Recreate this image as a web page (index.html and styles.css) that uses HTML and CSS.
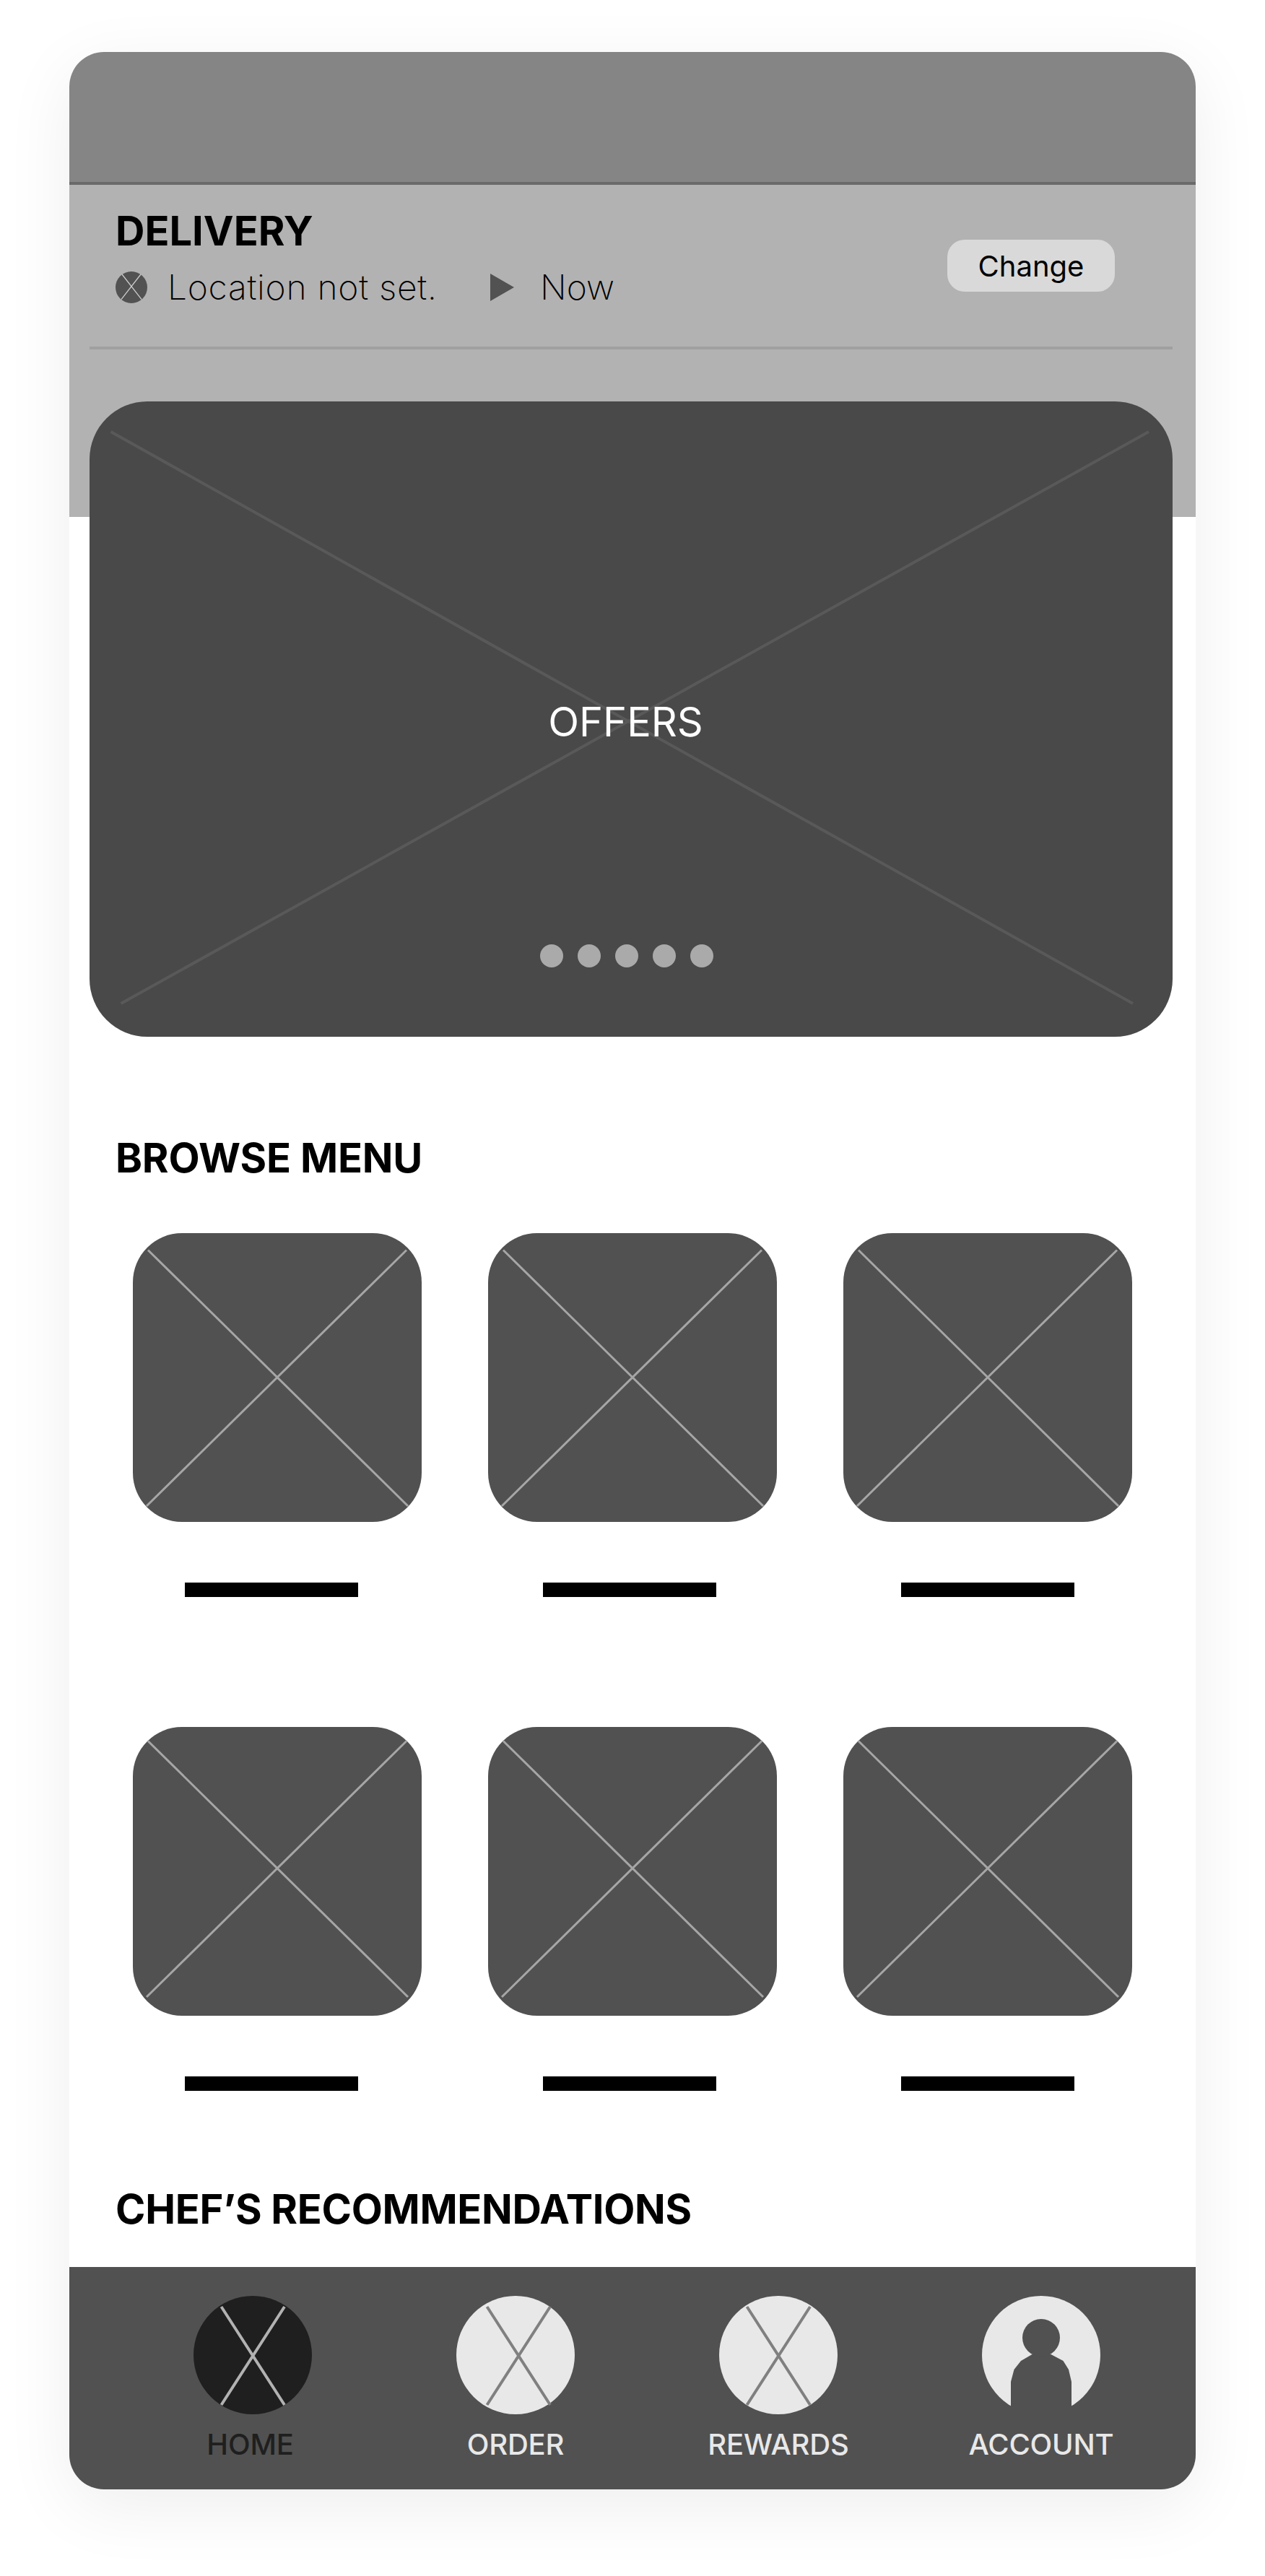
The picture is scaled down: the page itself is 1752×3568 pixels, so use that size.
FILE: index.html
```html
<!DOCTYPE html>
<html lang="en">
<head>
<meta charset="utf-8">
<title>Home</title>
<link rel="stylesheet" href="styles.css">
</head>
<body>
<svg class="defs" aria-hidden="true">
  <symbol id="tile-cross" viewBox="0 0 400 400"><path d="M21 23.5 381 378M379 23.5 19 378"/></symbol>
  <symbol id="icon-cross" viewBox="0 0 164 164"><path d="M38.5 15 126 151M126 15 38.5 151"/></symbol>
</svg>
<div class="screen">
  <div class="status-bar"></div>
  <header class="delivery">
    <div class="delivery-row">
      <div>
        <h2 class="heading">DELIVERY</h2>
        <div class="delivery-info">
          <svg class="pin" viewBox="0 0 44 44"><circle cx="22" cy="22" r="22"/><path d="M9 4 36 38.7M35 4 8 38.700"/></svg>
          <span class="place">Location not set.</span>
          <svg class="play" viewBox="0 0 33 38"><path d="M0 0 33 19 0 38z"/></svg>
          <span>Now</span>
        </div>
      </div>
      <button class="change">Change</button>
    </div>
  </header>
  <main>
    <section class="offers">
      <svg class="offers-cross" viewBox="0 0 1500 880"><path d="M29.5 42 1445 834M1467 42 43.500 834"/></svg>
      <span class="offers-label">OFFERS</span>
      <div class="dots"><i></i><i></i><i></i><i></i><i></i></div>
    </section>
    <h2 class="heading menu-title">BROWSE MENU</h2>
    <div class="tiles">
      <svg class="tile"><use href="#tile-cross"/></svg>
      <svg class="tile"><use href="#tile-cross"/></svg>
      <svg class="tile"><use href="#tile-cross"/></svg>
    </div>
    <div class="bars"><i></i><i></i><i></i></div>
    <div class="tiles second">
      <svg class="tile"><use href="#tile-cross" y="-4"/></svg>
      <svg class="tile"><use href="#tile-cross" y="-4"/></svg>
      <svg class="tile"><use href="#tile-cross" y="-4"/></svg>
    </div>
    <div class="bars"><i></i><i></i><i></i></div>
    <h2 class="heading chef-title">CHEF’S RECOMMENDATIONS</h2>
  </main>
  <nav class="tabs">
    <a class="tab active"><svg class="tab-icon" viewBox="0 0 164 164"><circle cx="82" cy="82" r="82"/><use href="#icon-cross" width="164" height="164"/></svg><span>HOME</span></a>
    <a class="tab"><svg class="tab-icon" viewBox="0 0 164 164"><circle cx="82" cy="82" r="82"/><use href="#icon-cross" x="4" width="164" height="164"/></svg><span>ORDER</span></a>
    <a class="tab"><svg class="tab-icon" viewBox="0 0 164 164"><circle cx="82" cy="82" r="82"/><use href="#icon-cross" width="164" height="164"/></svg><span>REWARDS</span></a>
    <a class="tab"><svg class="tab-icon" viewBox="0 0 164 164"><circle cx="82" cy="82" r="82"/><path class="person" d="M69.500 81 54 90 44.500 102 40 119V155L50 164H114L124 155V119L120 102 112.500 90 95.500 81z"/><circle class="person" cx="82" cy="58" r="26"/></svg><span>ACCOUNT</span></a>
  </nav>
</div>
</body>
</html>
```

FILE: styles.css
```css
* { box-sizing: border-box; }

body {
  margin: 0;
  padding: 72px 96px 120px;
  background: #fff;
  color: #000;
  font-family: Inter, "Liberation Sans", sans-serif;
}

.defs { display: none; }

.screen {
  display: flex;
  flex-direction: column;
  height: 3376px;
  border-radius: 48px;
  background: #fff;
  box-shadow: 0 24px 96px rgba(0, 0, 0, .07);
  overflow: hidden;
}

.heading {
  margin: 0;
  font-size: 56px;
  font-weight: 700;
  line-height: 68px;
}

.status-bar {
  height: 184px;
  background: #858585;
  border-bottom: 4px solid #6a6a6a;
}

.delivery {
  height: 460px;
  padding: 0 32px 0 28px;
  background: #b2b2b2;
}

.delivery-row {
  display: flex;
  justify-content: space-between;
  align-items: flex-start;
  height: 228px;
  padding: 30px 80px 0 36px;
  border-bottom: 4px solid #a0a0a0;
}

.delivery-info {
  display: flex;
  align-items: center;
  margin-top: 15px;
  font-size: 48px;
  font-weight: 200;
  line-height: 58px;
}

.pin { width: 44px; height: 44px; fill: #525252; stroke: none; }
.pin path { stroke: #ccc; stroke-width: 1.3; }
.place { width: 447px; margin-left: 28px; letter-spacing: .7px; }
.play { width: 33px; height: 38px; margin-right: 36px; fill: #525252; }

.change {
  width: 232px;
  height: 72px;
  margin-top: 46px;
  padding: 2px 0 0;
  border: 0;
  border-radius: 24px;
  background: #d9d9d9;
  color: #000;
  font: 400 40px/48px Inter, "Liberation Sans", sans-serif;
}

main { height: 2424px; }

.offers {
  position: relative;
  display: flex;
  flex-direction: column;
  align-items: center;
  width: 1500px;
  height: 880px;
  margin: -160px 0 0 28px;
  padding: 410px 12px 0 0;
  border-radius: 80px;
  background: #494949;
  color: #fff;
}

.offers-cross {
  position: absolute;
  inset: 0;
  stroke: #595959;
  stroke-width: 4;
}

.offers-label {
  position: relative;
  margin-right: 3px;
  font-size: 56px;
  line-height: 68px;
}

.dots { display: flex; gap: 20px; margin-top: 274px; }
.dots i { width: 32px; height: 32px; border-radius: 50%; background: #aaa; }

.menu-title { margin: 134px 0 70px 64px; letter-spacing: -.2px; }

.tiles { display: flex; gap: 92px; margin-left: 88px; }
.tiles.second { margin-top: 180px; }

.tile {
  width: 400px;
  height: 400px;
  border-radius: 68px;
  background: #515151;
  stroke: #a6a6a6;
  stroke-width: 3;
}

.bars { display: flex; gap: 256px; margin: 84px 0 0 160px; }
.bars i { width: 240px; height: 20px; background: #000; }

.chef-title { margin: 130px 0 0 64px; letter-spacing: -.3px; }

.tabs {
  display: flex;
  gap: 100px;
  height: 308px;
  padding: 40px 0 0 122px;
  background: #515151;
  color: #e8e8e8;
  font-size: 40px;
  font-weight: 500;
  letter-spacing: -.2px;
  line-height: 48px;
}

.tab {
  display: flex;
  flex-direction: column;
  align-items: center;
  width: 264px;
  gap: 18px;
}

.tab-icon {
  width: 164px;
  height: 164px;
  fill: #e8e8e8;
  stroke: none;
  overflow: visible;
}

.tab-icon use { stroke: #808080; stroke-width: 4; }
.tab-icon .person { fill: #515151; }

.tab.active { color: #1f1f1f; }
.tab.active span { padding-right: 7px; }
.tab.active .tab-icon { fill: #1f1f1f; }
.tab.active use { stroke: #b2b2b2; }
```
